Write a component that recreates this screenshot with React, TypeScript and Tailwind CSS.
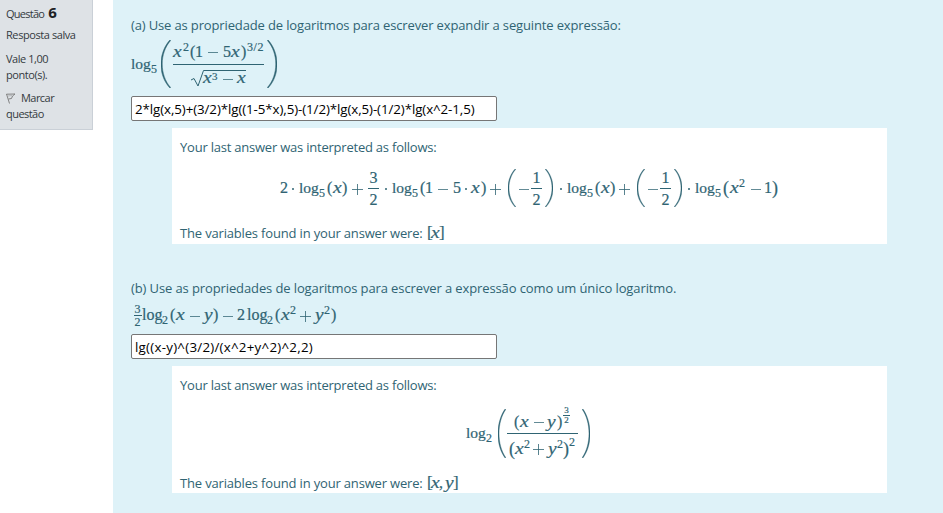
import type { ReactNode } from "react";

type Props = { c?: string; children?: ReactNode };

/* One upright glyph group of a formula; the class sets its advance width. */
function T({ c = "", children }: Props) {
  return <span className={`block shrink-0 whitespace-nowrap ${c}`}>{children}</span>;
}

function I({ c = "", children }: Props) {
  return (
    <span className={`block shrink-0 whitespace-nowrap text-[17px] italic ${c}`}>
      <span className="inline-block origin-left scale-x-[1.15]">{children}</span>
    </span>
  );
}

function Sub({ c = "", children }: Props) {
  return <span className={`mt-[9px] block shrink-0 text-[12px] ${c}`}>{children}</span>;
}

function Sup({ c = "", children }: Props) {
  return <span className={`mb-[10px] block shrink-0 text-[12px] ${c}`}>{children}</span>;
}

function Minus({ c = "" }: { c?: string }) {
  return (
    <span className={`block shrink-0 ${c}`}>
      <span className="mt-0.5 ml-[2px] block h-px w-[10px] bg-[#2f6473]/75" />
    </span>
  );
}

function Plus({ c = "" }: { c?: string }) {
  return (
    <svg viewBox="0 0 11 11" className={`mt-0.5 h-[11px] shrink-0 ${c}`} preserveAspectRatio="xMinYMid meet">
      <path d="M0 5.5H11M5.5 0V11" stroke="#2f6473" strokeOpacity=".8" />
    </svg>
  );
}

function Dot({ c = "" }: { c?: string }) {
  return (
    <span className={`block shrink-0 ${c}`}>
      <span className="mt-px block size-[2px] rounded-full bg-[#2f6473]" />
    </span>
  );
}

function Paren({ right = false, c = "" }: { right?: boolean; c?: string }) {
  return (
    <svg viewBox="0 0 10 48" preserveAspectRatio="none" className={`shrink-0 ${c}`}>
      <path
        d={
          right
            ? "M.3 .4C11.6 13 11.6 35 .3 47.6L1.2 47.9C14 34 12 12 1.2 .1Z"
            : "M9.7 .4C-1.6 13 -1.6 35 9.7 47.6L8.8 47.9C-4 34 -2 12 8.8 .1Z"
        }
        fill="#2f6473"
        stroke="#2f6473"
        strokeWidth=".5"
      />
    </svg>
  );
}

function Frac({ n, d, c = "" }: { n: string; d: string; c?: string }) {
  return (
    <span className={`flex shrink-0 flex-col items-center ${c}`}>
      <span className="leading-[21px]">{n}</span>
      <span className="h-px w-full bg-[#2f6473]" />
      <span className="leading-[21px]">{d}</span>
    </span>
  );
}

function Formula({ c = "", children }: Props) {
  return (
    <div
      className={`flex items-center font-['Liberation_Serif',serif] text-[16px] leading-5 text-[#2f6473] [-webkit-text-stroke:0.2px_#2f6473] ${c}`}
    >
      {children}
    </div>
  );
}

function Log({ base }: { base: string }) {
  return (
    <>
      <T c="w-[20px] text-[15.5px]">log</T>
      <Sub c="w-[8px]">{base}</Sub>
    </>
  );
}

function NegHalf() {
  return (
    <>
      <Paren c="h-[38px] w-[8px]" />
      <Minus c="ml-px w-[14px]" />
      <Frac n="1" d="2" c="w-[11px]" />
      <Paren right c="ml-[3px] h-[38px] w-[8px]" />
    </>
  );
}

function Sidebar() {
  return (
    <aside className="h-[130px] w-[93px] shrink-0 border-r border-b border-[#cad0d7] bg-[#dee2e6] pl-[6px] text-[11px] leading-4 text-[#343a40]">
      <h3 className="flex h-[26px] items-baseline gap-1 pt-px">
        <span className="tracking-[-0.75px]">Questão</span>
        <span className="text-[15px] leading-[22px] font-bold text-[#1d2125]">6</span>
      </h3>
      <p className="mt-px tracking-[-0.42px]">Resposta salva</p>
      <p className="mt-2 tracking-[-0.45px]">
        Vale 1,00
        <br />
        ponto(s).
      </p>
      <p className="mt-[7px] tracking-[-0.55px]">
        <svg viewBox="0 0 10 11" className="mr-[5px] inline h-[11px] w-[10px] align-[-2px]" fill="none" stroke="#777">
          <path d="M.5 1 3.5 10.5M.5 1.2 9 1 6.5 3 5.5 5.5 2.5 6" strokeWidth=".9" />
          <path d="M2 3 6 2.5" strokeOpacity=".4" />
        </svg>
        Marcar
        <br />
        questão
      </p>
    </aside>
  );
}

function Answer({ children }: { children: ReactNode }) {
  return (
    <div className="flex h-[25px] w-[366px] items-center rounded-[2px] border border-[#767676] bg-white pt-[2px] pl-[3px] text-[13.33px] whitespace-nowrap text-black">
      {children}
    </div>
  );
}

function Interpreted() {
  return <p className="mt-[9px] h-5 leading-5 tracking-[-0.22px]">Your last answer was interpreted as follows:</p>;
}

function Variables({ c, children }: Props) {
  return (
    <div className={`flex h-5 items-center ${c}`}>
      <span className="w-[247px] pt-px tracking-[-0.17px] whitespace-nowrap">
        The variables found in your answer were:
      </span>
      <Formula>{children}</Formula>
    </div>
  );
}

export default function App() {
  return (
    <div className="flex h-[513px] w-[943px] overflow-hidden bg-white font-['Open_Sans','Noto_Sans',sans-serif]">
      <Sidebar />
      <main className="ml-5 flex h-[513px] w-[830px] flex-col bg-[#def2f8] pl-[18px] text-[13px] text-[#2f6473]">
        <p className="mt-[15px] h-5 leading-5 tracking-[-0.14px]">
          (a) Use as propriedade de logaritmos para escrever expandir a seguinte expressão:
        </p>
        <Formula c="mt-[4px] h-[50px]">
          <Log base="5" />
          <Paren c="ml-[2px] h-[48px] w-[10px]" />
          <span className="ml-[2px] flex w-[91px] shrink-0 flex-col">
            <span className="flex h-[25px] items-center">
              <I c="w-[10px]">x</I>
              <Sup c="w-[7px]">2</Sup>
              <T c="w-[5px]">(</T>
              <T c="w-[11px]">1</T>
              <Minus c="w-[17px]" />
              <T c="w-[8px]">5</T>
              <I c="w-[10px]">x</I>
              <T c="w-[6px]">)</T>
              <Sup c="tracking-[0.6px]">3/2</Sup>
            </span>
            <span className="h-px bg-[#2f6473]" />
            <span className="flex h-[24px] items-center pt-[2px] pl-[18px]">
              <svg viewBox="0 0 56 19" className="h-[19px] w-[12px] shrink-0 overflow-visible" preserveAspectRatio="xMinYMin slice">
                <path d="M0 11 3 9.5 7 17 12.5 1.5H55" fill="none" stroke="#2f6473" />
              </svg>
              <I c="w-[9px]">x</I>
              <span className="mb-[5px] block w-[9px] shrink-0 text-[11px]">3</span>
              <Minus c="w-[16px]" />
              <I>x</I>
            </span>
          </span>
          <Paren right c="ml-[3px] h-[48px] w-[10px]" />
        </Formula>
        <div className="mt-[7px]">
          <Answer>
            <span className="tracking-[-0.09px]">2*lg(x,5)+(3/2)*lg((1-5*x),5)-(1/2)*lg(x,5)-(1/2)*lg(x^2-1,5)</span>
          </Answer>
        </div>
        <section className="mt-[7px] ml-[41px] flex h-[116px] w-[715px] flex-col bg-white pl-2">
          <Interpreted />
          <Formula c="mt-[6px] ml-[100px] h-[50px]">
            <T c="w-[12px]">2</T>
            <Dot c="w-[7px]" />
            <Log base="5" />
            <T c="w-[6px]">(</T>
            <I c="w-[9px]">x</I>
            <T c="w-[10px]">)</T>
            <Plus c="w-[16px]" />
            <Frac n="3" d="2" c="w-[11px]" />
            <Dot c="ml-[6px] w-[7px]" />
            <Log base="5" />
            <T c="w-[5px]">(</T>
            <T c="w-[11px]">1</T>
            <Minus c="w-[17px]" />
            <T c="w-[12px]">5</T>
            <Dot c="w-[6px]" />
            <I c="w-[10px]">x</I>
            <T c="w-[9px]">)</T>
            <Plus c="w-[18px]" />
            <NegHalf />
            <Dot c="ml-[7px] w-[7px]" />
            <Log base="5" />
            <T c="w-[6px]">(</T>
            <I c="w-[9px]">x</I>
            <T c="w-[9px]">)</T>
            <Plus c="w-[18px]" />
            <NegHalf />
            <Dot c="ml-[6px] w-[7px]" />
            <Log base="5" />
            <T c="w-[7px] text-[18px]">(</T>
            <I c="w-[9px]">x</I>
            <Sup c="w-[10px]">2</Sup>
            <Minus c="w-[15px]" />
            <T c="w-[8px]">1</T>
            <T c="text-[18px]">)</T>
          </Formula>
          <Variables c="mt-[10px]">
            <T c="w-[4px] text-[17px]">[</T>
            <I c="w-[8px]">x</I>
            <T c="text-[17px]">]</T>
          </Variables>
        </section>
        <p className="mt-[34px] h-5 leading-5 tracking-[-0.11px]">
          (b) Use as propriedades de logaritmos para escrever a expressão como um único logaritmo.
        </p>
        <Formula c="mt-[4px] h-[26px] pl-[2px]">
          <span className="flex w-[9px] shrink-0 flex-col items-center text-[12px] leading-[12px]">
            <span>3</span>
            <span className="h-px w-[8px] bg-[#2f6473]" />
            <span>2</span>
          </span>
          <T c="w-[20px]">log</T>
          <Sub c="w-[8px]">2</Sub>
          <T c="w-[6px]">(</T>
          <I c="w-[12px]">x</I>
          <Minus c="w-[16px]" />
          <I c="w-[9px]">y</I>
          <T c="w-[8px]">)</T>
          <Minus c="w-[16px]" />
          <T c="w-[10px]">2</T>
          <T c="w-[20px]">log</T>
          <Sub c="w-[8px]">2</Sub>
          <T c="w-[6px]">(</T>
          <I c="w-[9px]">x</I>
          <Sup c="w-[10px]">2</Sup>
          <Plus c="w-[15px]" />
          <I c="w-[9px]">y</I>
          <Sup c="w-[7px]">2</Sup>
          <T>)</T>
        </Formula>
        <div className="mt-[6px]">
          <Answer>
            <span className="tracking-[0.25px]">lg((x-y)^(3/2)/(x^2+y^2)^2,2)</span>
          </Answer>
        </div>
        <section className="mt-[7px] ml-[41px] flex h-[127px] w-[715px] flex-col bg-white pl-2">
          <Interpreted />
          <Formula c="mt-[12px] ml-[286px] h-[52px]">
            <Log base="2" />
            <Paren c="ml-[4px] h-[49px] w-[8px]" />
            <span className="ml-px flex w-[71px] shrink-0 flex-col">
              <span className="flex h-[26px] items-center pt-[3px] pl-[7px]">
                <T c="w-[6px]">(</T>
                <I c="w-[12px]">x</I>
                <Minus c="w-[15px]" />
                <I c="w-[10px]">y</I>
                <T c="w-[6px]">)</T>
                <span className="mb-[12px] flex w-[7px] flex-col items-center text-[9px] leading-[9px]">
                  <span>3</span>
                  <span className="h-px w-full bg-[#2f6473]" />
                  <span>2</span>
                </span>
              </span>
              <span className="h-px bg-[#2f6473]" />
              <span className="flex h-[25px] items-center pt-[4px] pl-[2px]">
                <T c="w-[6px] text-[18px]">(</T>
                <I c="w-[9px]">x</I>
                <Sup c="w-[9px]">2</Sup>
                <Plus c="w-[15px]" />
                <I c="w-[9px]">y</I>
                <Sup c="w-[6px]">2</Sup>
                <T c="w-[6px] text-[18px]">)</T>
                <span className="mb-[14px] text-[12px]">2</span>
              </span>
            </span>
            <Paren right c="ml-[4px] h-[49px] w-[8px]" />
          </Formula>
          <Variables c="mt-[14px]">
            <T c="w-[4px] text-[17px]">[</T>
            <I c="w-[8px]">x</I>
            <T c="w-[6px]">,</T>
            <I c="w-[8px]">y</I>
            <T c="text-[17px]">]</T>
          </Variables>
        </section>
      </main>
    </div>
  );
}
